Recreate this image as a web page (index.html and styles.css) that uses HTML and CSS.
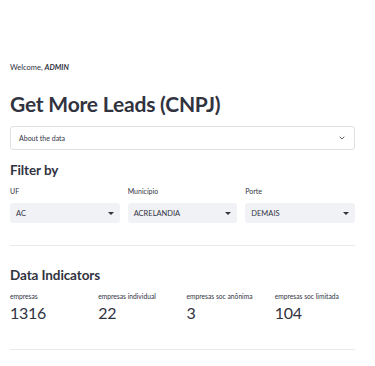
FILE: index.html
```html
<!DOCTYPE html>
<html lang="en">
<head>
    <meta charset="UTF-8">
    <meta name="viewport" content="width=device-width, initial-scale=1.0">
    <title>Get More Leads (CNPJ)</title>
<link rel="stylesheet" href="styles.css">
</head>
<body>
    <div class="main">
        <p class="welcome">Welcome, <em>ADMIN</em></p>

        <h1>Get More Leads (CNPJ)</h1>

        <!-- Expander -->
        <div class="expander">
            <span>About the data</span>
            <svg class="chevron" width="8" height="8" viewBox="0 0 16 16">
                <path d="M4 6l4 4 4-4" fill="none" stroke="#31333f" stroke-width="1.6" stroke-linecap="round" stroke-linejoin="round"/>
            </svg>
        </div>

        <!-- Filters -->
        <h2 class="filter-title">Filter by</h2>
        <div class="filters">
            <div class="field">
                <label>UF</label>
                <div class="select"><span>AC</span><span class="caret"></span></div>
            </div>
            <div class="field">
                <label>Município</label>
                <div class="select"><span>ACRELANDIA</span><span class="caret"></span></div>
            </div>
            <div class="field">
                <label>Porte</label>
                <div class="select"><span>DEMAIS</span><span class="caret"></span></div>
            </div>
        </div>

        <div class="divider"></div>

        <!-- Metrics -->
        <h2 class="metrics-title">Data Indicators</h2>
        <div class="metrics">
            <div class="metric">
                <div class="metric-label">empresas</div>
                <div class="metric-value">1316</div>
            </div>
            <div class="metric">
                <div class="metric-label">empresas individual</div>
                <div class="metric-value">22</div>
            </div>
            <div class="metric">
                <div class="metric-label">empresas soc anônima</div>
                <div class="metric-value">3</div>
            </div>
            <div class="metric">
                <div class="metric-label">empresas soc limitada</div>
                <div class="metric-value">104</div>
            </div>
        </div>

        <div class="divider last"></div>
    </div>
</body>
</html>
```

FILE: styles.css
```css
body {
    font-family: "Source Sans Pro", Lato, "Noto Sans", sans-serif;
    background-color: #fff;
    color: #31333f;
    margin: 0;
    padding: 0;
}

.main {
    padding: 62px 20px 0 10px;
}

.welcome {
    font-size: 7.5px;
    line-height: 12px;
    margin: 0;
}

.welcome em {
    font-weight: 700;
}

h1 {
    font-size: 21px;
    font-weight: 700;
    letter-spacing: -0.2px;
    line-height: 28px;
    margin: 16px 0 8px;
}

.expander {
    display: flex;
    justify-content: space-between;
    align-items: center;
    height: 22px;
    padding: 0 8px;
    border: 1px solid rgba(49, 51, 63, 0.15);
    border-radius: 3px;
    font-size: 7px;
}

h2 {
    font-size: 13.5px;
    font-weight: 700;
    letter-spacing: -0.1px;
    line-height: 18px;
}

.filter-title {
    margin: 11px 0 7px;
}

.metrics-title {
    margin: 0 0 7px;
}

.filters {
    display: grid;
    grid-template-columns: repeat(3, 1fr);
    gap: 8px;
}

.field label {
    display: block;
    font-size: 7px;
    line-height: 10px;
    margin-bottom: 7px;
}

.select {
    display: flex;
    justify-content: space-between;
    align-items: center;
    height: 20px;
    padding: 0 6px;
    background-color: #f0f2f6;
    border-radius: 3px;
    font-size: 7.5px;
}

.caret {
    width: 0;
    height: 0;
    border-left: 3px solid transparent;
    border-right: 3px solid transparent;
    border-top: 3px solid #31333f;
}

.divider {
    border-bottom: 1px solid rgba(49, 51, 63, 0.1);
    margin: 22px 0 20px;
}

.metrics {
    display: grid;
    grid-template-columns: repeat(4, 1fr);
    gap: 8px;
}

.metric-label {
    font-size: 6.7px;
    line-height: 10px;
}

.metric-value {
    font-size: 16px;
    letter-spacing: -0.3px;
    line-height: 24px;
}

.divider.last {
    margin-top: 24px;
}
```
